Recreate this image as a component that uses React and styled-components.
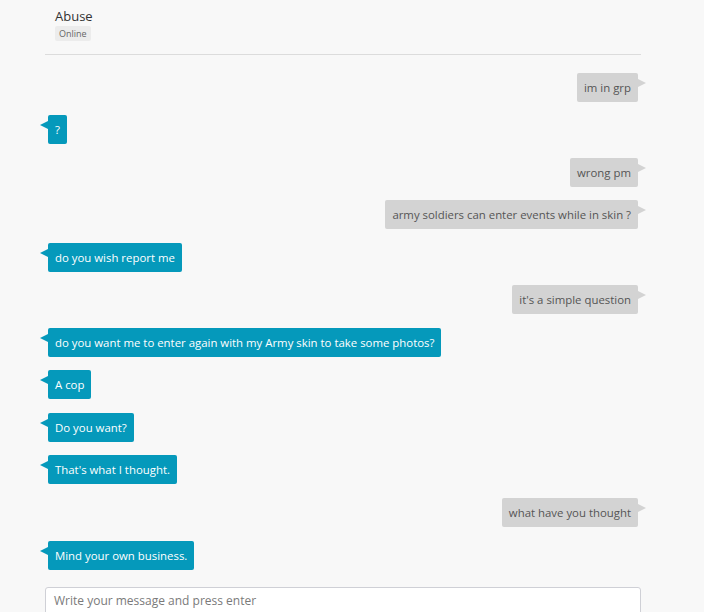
import styled, { createGlobalStyle } from "styled-components";

const GlobalStyle = createGlobalStyle`
  html, body {
    margin: 0;
    background: #f8f8f8;
    font-family: "Open Sans", "Liberation Sans", sans-serif;
  }
`;

export const ChatContainer = styled.div`
  width: 596px;
  margin-left: 45px;
`;

export const Header = styled.div`
  display: flex;
  flex-direction: column;
  align-items: flex-start;
  padding: 8px 10px 13px;
  border-bottom: 1px solid #dcdcdc;
`;

export const Name = styled.div`
  font-size: 13px;
  line-height: 17px;
  color: #333;
`;

export const Status = styled.span`
  margin-top: 1px;
  padding: 2px 4px;
  font-size: 9px;
  line-height: 11px;
  color: #666;
  background: #ececec;
  border-radius: 2px;
`;

export const MessageList = styled.div`
  display: flex;
  flex-direction: column;
  gap: 13.55px;
  padding: 17.5px 3px 17px;
`;

export const Row = styled.div`
  display: flex;
  justify-content: ${(props) => (props.$mine ? "flex-end" : "flex-start")};
`;

export const Bubble = styled.div`
  position: relative;
  padding: 7px 7px;
  font-size: 11.4px;
  line-height: 15px;
  border-radius: 2px;
  background: ${(props) => (props.$mine ? "#d3d3d3" : "#0599bb")};
  color: ${(props) => (props.$mine ? "#555" : "#fff")};

  &::after {
    content: "";
    position: absolute;
    top: 6px;
    width: 0;
    height: 0;
    border-top: 4px solid transparent;
    border-bottom: 4px solid transparent;
    ${(props) =>
      props.$mine
        ? "right: -8px; border-left: 8px solid #d3d3d3;"
        : "left: -8px; border-right: 8px solid #0599bb;"}
  }
`;

export const Composer = styled.textarea`
  display: block;
  box-sizing: border-box;
  width: 596px;
  height: 40px;
  padding: 5px 8px;
  border: 1px solid #cfd0d6;
  border-radius: 3px;
  background: #fff;
  font-family: inherit;
  font-size: 12px;
  line-height: 16px;
  color: #333;
  resize: none;
  outline: none;

  &::placeholder {
    color: #7a7a7a;
  }
`;

const messages = [
  { mine: true, text: "im in grp" },
  { mine: false, text: "?" },
  { mine: true, text: "wrong pm" },
  { mine: true, text: "army soldiers can enter events while in skin ?" },
  { mine: false, text: "do you wish report me" },
  { mine: true, text: "it's a simple question" },
  { mine: false, text: "do you want me to enter again with my Army skin to take some photos?" },
  { mine: false, text: "A cop" },
  { mine: false, text: "Do you want?" },
  { mine: false, text: "That's what I thought." },
  { mine: true, text: "what have you thought" },
  { mine: false, text: "Mind your own business." },
];

export default function App() {
  return (
    <>
      <GlobalStyle />
      <ChatContainer>
        <Header>
          <Name>Abuse</Name>
          <Status>Online</Status>
        </Header>
        <MessageList>
          {messages.map((m, i) => (
            <Row key={i} $mine={m.mine}>
              <Bubble $mine={m.mine}>{m.text}</Bubble>
            </Row>
          ))}
        </MessageList>
        <Composer placeholder="Write your message and press enter" />
      </ChatContainer>
    </>
  );
}
